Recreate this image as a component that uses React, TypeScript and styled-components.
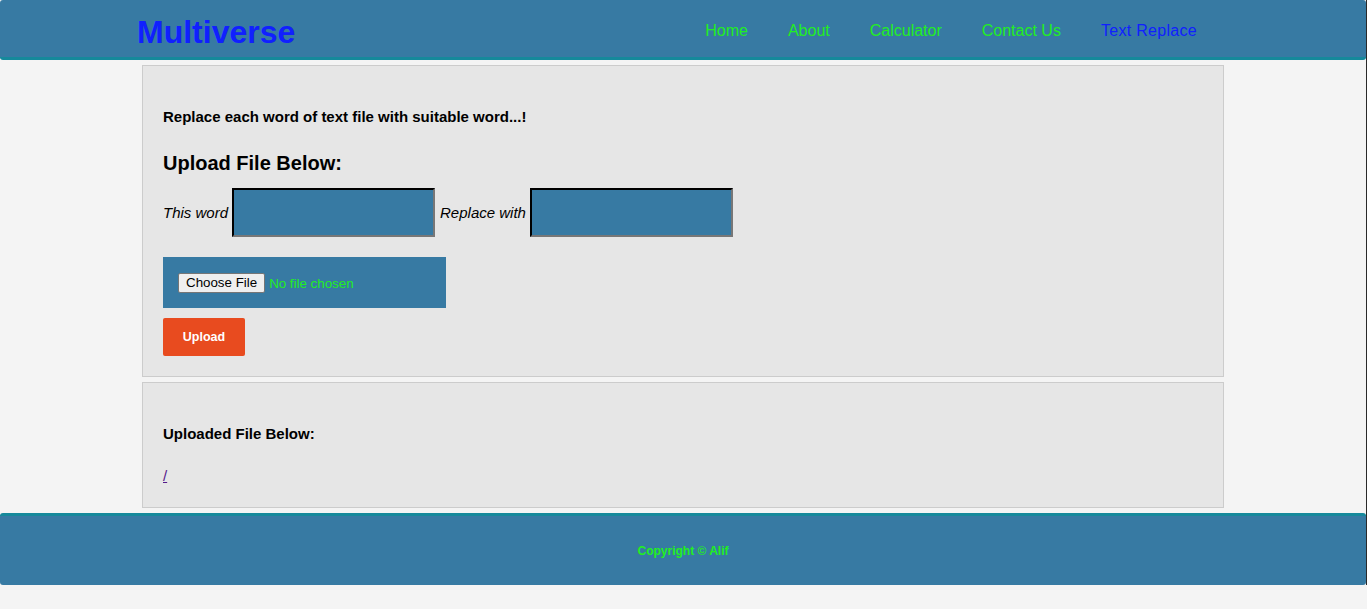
import React from "react";
import styled, { createGlobalStyle } from "styled-components";

const GlobalStyle = createGlobalStyle`
  html {
    background: #f4f4f4;
    border-right: 1px solid #2a2a2a;
  }
  body {
    margin: 0;
    font-family: "Liberation Sans", Arial, sans-serif;
    font-size: 15px;
    color: #000;
  }
  * { box-sizing: border-box; }
`;

const BLUE = "#377aa3";
const TEAL = "#15899b";
const GREEN = "#22ee22";
const BRIGHT_BLUE = "#1020ff";

const Header = styled.header`
  height: 60px;
  background: ${BLUE};
  border-bottom: 3px solid ${TEAL};
  border-radius: 3px;
  display: flex;
  align-items: center;
  justify-content: space-between;
  padding: 0 149px 0 137px;
`;

const Logo = styled.div`
  font-size: 32px;
  font-weight: bold;
  color: ${BRIGHT_BLUE};
  line-height: 37px;
  margin-top: 8px;
`;

const Nav = styled.nav`
  display: flex;
  align-items: center;
  margin-top: 5px;
`;

const NavLink = styled.a<{ $active?: boolean }>`
  font-size: 16px;
  color: ${(p) => (p.$active ? BRIGHT_BLUE : GREEN)};
  text-decoration: none;
  padding: 0 20px;
  line-height: 18px;
  letter-spacing: ${(p) => (p.$active ? "0.3px" : "0")};
`;

const Main = styled.main`
  display: flex;
  flex-direction: column;
  gap: 5px;
  padding: 5px 0;
`;

const Panel = styled.section<{ $bottom?: number }>`
  width: 1082px;
  margin: 0 auto;
  background: #e6e6e6;
  border: 1px solid #cccccc;
  padding: 20px 20px ${(p) => p.$bottom ?? 20}px;
  display: flex;
  flex-direction: column;
  align-items: flex-start;
`;

const Lead = styled.h4<{ $top: number }>`
  margin: ${(p) => p.$top}px 0 0;
  font-size: 15px;
  line-height: 18px;
  font-weight: bold;
`;

const Heading = styled.h3`
  margin: 26px 0 0;
  font-size: 20px;
  line-height: 23px;
  font-weight: bold;
`;

const FieldRow = styled.div`
  margin-top: 13px;
  display: flex;
  align-items: center;
  gap: 4px;
`;

const Label = styled.em<{ $gap?: number }>`
  font-style: italic;
  font-size: 15px;
  margin-left: ${(p) => p.$gap ?? 0}px;
`;

const TextInput = styled.input`
  width: 203px;
  height: 49px;
  background: ${BLUE};
  border: 2px inset #767676;
  border-top-color: #222;
  border-left-color: #222;
  border-bottom-color: #777;
  border-right-color: #777;
  margin: 0;
  padding: 0 4px;
  color: #fff;
  font-size: 15px;
`;

const FileBox = styled.div`
  margin-top: 20px;
  width: 283px;
  height: 51px;
  background: ${BLUE};
  padding: 0 15px;
  display: flex;
  align-items: center;
`;

const FileInput = styled.input`
  color: ${GREEN};
  font-family: "Liberation Sans", Arial, sans-serif;
  font-size: 13.333px;
  &::file-selector-button {
    font-family: "Liberation Sans", Arial, sans-serif;
    font-size: 13.333px;
    color: #000;
    background: #efefef;
    border: 1px solid #767676;
    border-radius: 2px;
    padding: 1px 7px;
    margin-right: 4px;
    height: 20px;
  }
`;

const UploadButton = styled.button`
  margin-top: 10px;
  width: 82px;
  height: 38px;
  background: #e84b1f;
  color: #fff;
  border: none;
  border-radius: 2px;
  font-family: "Liberation Sans", Arial, sans-serif;
  font-size: 12.5px;
  font-weight: bold;
`;

const FileLink = styled.a`
  margin-top: 23px;
  line-height: 20px;
  font-size: 15px;
  color: #551a8b;
  text-decoration: underline;
`;

const Footer = styled.footer`
  height: 72px;
  background: ${BLUE};
  border-top: 3px solid ${TEAL};
  border-radius: 3px;
  display: flex;
  align-items: center;
  justify-content: center;
`;

const Copy = styled.p`
  margin: 0;
  font-size: 12px;
  font-weight: bold;
  color: ${GREEN};
`;

export default function App() {
  return (
    <>
      <GlobalStyle />
      <Header>
        <Logo>Multiverse</Logo>
        <Nav>
          <NavLink href="#">Home</NavLink>
          <NavLink href="#">About</NavLink>
          <NavLink href="#">Calculator</NavLink>
          <NavLink href="#">Contact Us</NavLink>
          <NavLink href="#" $active>
            Text Replace
          </NavLink>
        </Nav>
      </Header>
      <Main>
        <Panel>
          <Lead $top={22}>Replace each word of text file with suitable word...!</Lead>
          <Heading>Upload File Below:</Heading>
          <FieldRow>
            <Label>This word</Label>
            <TextInput type="text" />
            <Label $gap={1}>Replace with</Label>
            <TextInput type="text" />
          </FieldRow>
          <FileBox>
            <FileInput type="file" />
          </FileBox>
          <UploadButton type="button">Upload</UploadButton>
        </Panel>
        <Panel $bottom={21}>
          <Lead $top={22}>Uploaded File Below:</Lead>
          <FileLink href="#">/</FileLink>
        </Panel>
      </Main>
      <Footer>
        <Copy>Copyright © Alif</Copy>
      </Footer>
    </>
  );
}
